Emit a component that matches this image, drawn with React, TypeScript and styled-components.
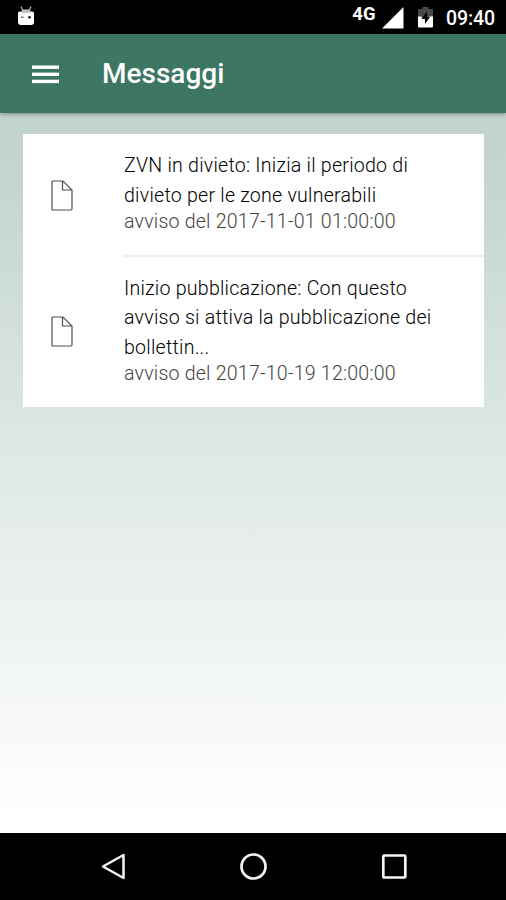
import React from "react";
import styled, { createGlobalStyle } from "styled-components";

const GlobalStyle = createGlobalStyle`
  * { box-sizing: border-box; }
  body { margin: 0; font-family: Roboto, "Liberation Sans", sans-serif; }
`;

const Screen = styled.div`
  width: 506px;
  height: 900px;
  display: flex;
  flex-direction: column;
  background: #000;
  overflow: hidden;
`;

const StatusBar = styled.header`
  height: 34px;
  flex: none;
  display: flex;
  align-items: flex-start;
  justify-content: space-between;
  padding: 0 11px 0 17px;
  color: #fff;
`;

const StatusGroup = styled.div`
  display: flex;
  align-items: flex-start;
`;

const Icon = styled.svg<{ $top?: number; $right?: number }>`
  display: block;
  flex: none;
  margin-top: ${(p) => p.$top ?? 0}px;
  margin-right: ${(p) => p.$right ?? 0}px;
`;

const Network = styled.span`
  margin: 4px 6px 0 0;
  font-size: 18.5px;
  line-height: 20px;
  font-weight: 700;
  letter-spacing: 0.3px;
`;

const Clock = styled.span`
  margin-top: 7px;
  font-size: 19.5px;
  line-height: 24px;
  font-weight: 500;
  letter-spacing: -0.1px;
`;

const Toolbar = styled.div`
  height: 79px;
  flex: none;
  display: flex;
  align-items: center;
  padding-left: 32px;
  background: #3d7662;
  color: #fff;
  box-shadow: 0 1px 4px rgba(0, 0, 0, 0.35);
  z-index: 1;
`;

const MenuButton = styled.button`
  padding: 0;
  margin: 1px 43px 0 0;
  border: 0;
  background: none;
`;

const Title = styled.h1`
  margin: 1px 0 0;
  font-size: 28px;
  line-height: 34px;
  font-weight: 500;
  letter-spacing: 0;
`;

const Content = styled.main`
  height: 720px;
  flex: none;
  padding: 21px 22px 0 23px;
  background: linear-gradient(#c1d3cc 0%, #c6d6d0 12%, #dae5e1 41%, #fff 98%);
`;

const Card = styled.ul`
  margin: 0;
  padding: 0;
  list-style: none;
  background: #fff;
  height: 273px;
`;

const Message = styled.li`
  display: flex;
  align-items: stretch;
`;

const IconCell = styled.div`
  width: 101px;
  flex: none;
  display: flex;
  align-items: center;
  padding-left: 28px;
`;

const Body = styled.div<{ $divided?: boolean }>`
  flex: 1;
  padding: ${(p) => (p.$divided ? "17px 0 21.5px" : "16.5px 0 21px")};
  border-bottom: ${(p) => (p.$divided ? "2px solid #ededed" : "0")};
  font-size: 19.6px;
  font-weight: 300;
  white-space: nowrap;
`;

const Subject = styled.div`
  line-height: 29.5px;
  letter-spacing: 0.23px;
  color: #000;
`;

const Notice = styled.div`
  line-height: 23.5px;
  letter-spacing: 0.2px;
  color: #444;
`;

const NavBar = styled.nav`
  height: 67px;
  flex: none;
  display: flex;
  justify-content: space-between;
  padding: 19px 98px 0 100px;
`;

const DocumentIcon = () => (
  <Icon $top={1} width="23" height="32" viewBox="0 0 23 32" fill="none" stroke="#505050" strokeWidth="1.2">
    <path d="M2 1H12L21 10V29Q21 30 20 30H2Q1 30 1 29V2Q1 1 2 1ZM11.5 1V10H21" />
  </Icon>
);

const messages = [
  {
    lines: ["ZVN in divieto: Inizia il periodo di", "divieto per le zone vulnerabili"],
    notice: "avviso del 2017-11-01 01:00:00",
  },
  {
    lines: ["Inizio pubblicazione: Con questo", "avviso si attiva la pubblicazione dei", "bollettin..."],
    notice: "avviso del 2017-10-19 12:00:00",
  },
];

export default function App() {
  return (
    <>
      <GlobalStyle />
      <Screen>
        <StatusBar>
          <Icon width="18" height="20" viewBox="0 0 18 20" $top={6}>
            <path d="M4 0.5L6 5M14 0.5L12 5" stroke="#aaa" strokeWidth="1.3" />
            <path d="M3 5.5Q1 5.5 1 7V16Q1 19 4 19H14Q17 19 17 16V7Q17 5.5 15 5.5Z" fill="#fff" />
            <path d="M5 3.5H13V7H5Z" fill="#c4c4c4" />
            <path d="M4 10.5H6.5V12H4Z" fill="#777" />
            <circle cx="12.5" cy="11.3" r="1.3" fill="#111" />
          </Icon>
          <StatusGroup>
            <Network>4G</Network>
            <Icon width="22" height="22" viewBox="0 0 22 22" $top={7} $right={14}>
              <path d="M0 21.5L21.5 0V21.5Z" fill="#fff" />
            </Icon>
            <Icon width="15" height="21" viewBox="0 0 15 21" $top={7} $right={13}>
              <path d="M4.5 0H10.5V2H14Q15 2 15 3V10H0V3Q0 2 1 2H4.5Z" fill="#484848" />
              <path d="M0 9.5H3L5.5 11.5L12 9.5H15V19.5Q15 20.5 14 20.5H1Q0 20.5 0 19.5Z" fill="#fff" />
              <path d="M9 4.5L3.5 12H7V17L12 10H9Z" fill="#000" />
            </Icon>
            <Clock>09:40</Clock>
          </StatusGroup>
        </StatusBar>
        <Toolbar>
          <MenuButton aria-label="Menu">
            <Icon width="27" height="19" viewBox="0 0 27 19" fill="#fff">
              <rect y="0.5" width="27" height="3.4" />
              <rect y="7.6" width="27" height="3.4" />
              <rect y="14.7" width="27" height="3.4" />
            </Icon>
          </MenuButton>
          <Title>Messaggi</Title>
        </Toolbar>
        <Content>
          <Card>
            {messages.map((m, i) => (
              <Message key={m.notice}>
                <IconCell>
                  <DocumentIcon />
                </IconCell>
                <Body $divided={i < messages.length - 1}>
                  {m.lines.map((line) => (
                    <Subject key={line}>{line}</Subject>
                  ))}
                  <Notice>{m.notice}</Notice>
                </Body>
              </Message>
            ))}
          </Card>
        </Content>
        <NavBar>
          <Icon width="28" height="30" viewBox="0 0 28 30" fill="none" stroke="#f4f4f4" strokeWidth="2.5">
            <path d="M23.5 3V26L3 14.5Z" strokeLinejoin="round" />
          </Icon>
          <Icon width="28" height="30" viewBox="0 0 28 30" fill="none" stroke="#f4f4f4" strokeWidth="2.7">
            <circle cx="13.5" cy="14.5" r="12" />
          </Icon>
          <Icon width="28" height="30" viewBox="0 0 28 30" fill="none" stroke="#f4f4f4" strokeWidth="2.7">
            <rect x="3.3" y="3.5" width="22" height="22" rx="1" />
          </Icon>
        </NavBar>
      </Screen>
    </>
  );
}
